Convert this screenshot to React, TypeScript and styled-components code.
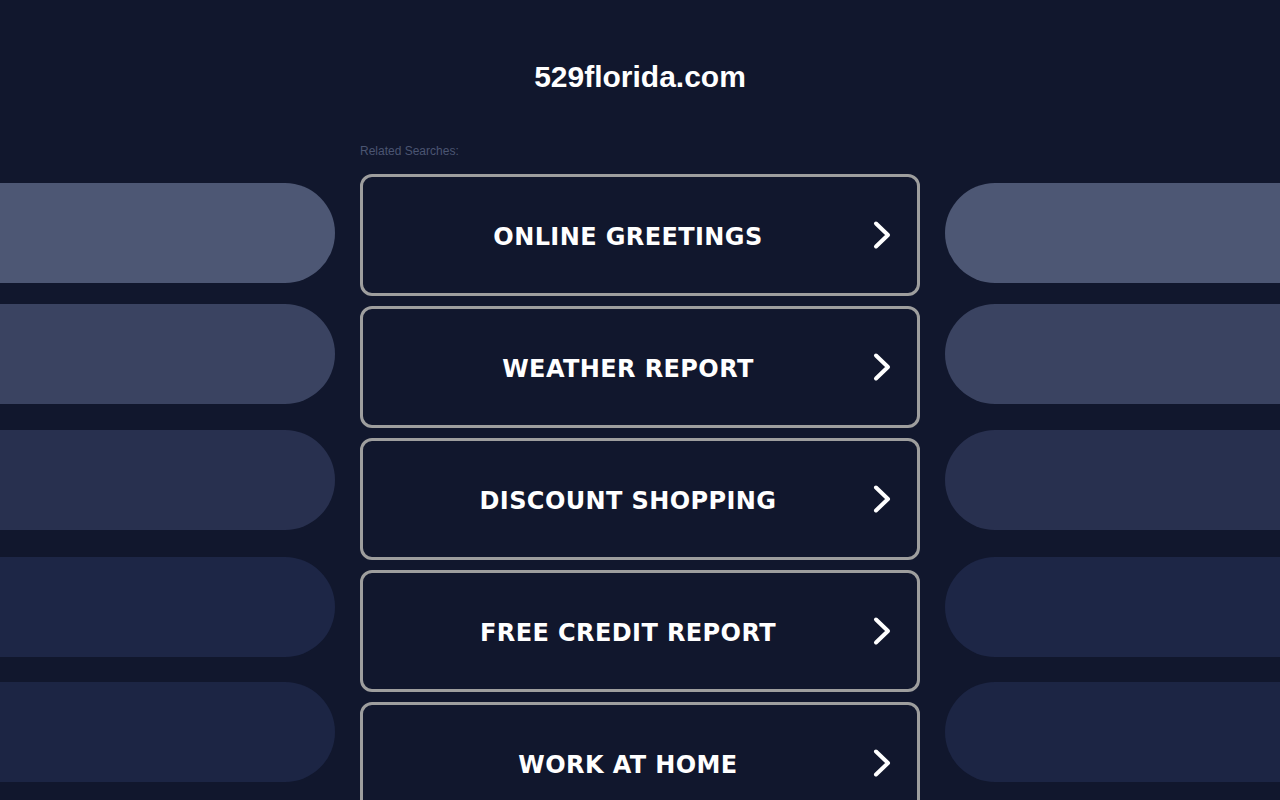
import React from 'react';
import styled, { createGlobalStyle } from 'styled-components';

const GlobalStyle = createGlobalStyle`
    html, body {
        margin: 0;
        padding: 0;
        background: #11172d;
        overflow: hidden;
    }
`;

const Page = styled.div`
    width: 1280px;
    height: 800px;
    display: grid;
    grid-template-columns: 335px 560px 335px;
    column-gap: 25px;
    background: #11172d;
    overflow: hidden;
`;

const Side = styled.div`
    display: flex;
    flex-direction: column;
    padding-top: 183px;
`;

const Pill = styled.div<{ $color: string; $gap: number; $right?: boolean }>`
    flex: none;
    width: 100%;
    height: 100px;
    margin-top: ${p => p.$gap}px;
    background: ${p => p.$color};
    border-radius: ${p => (p.$right ? '50px 0 0 50px' : '0 50px 50px 0')};
`;

const Center = styled.main`
    display: flex;
    flex-direction: column;
`;

const Title = styled.h1`
    margin: 0;
    padding-top: 60px;
    height: 34px;
    text-align: center;
    font-family: 'Liberation Sans', Arial, sans-serif;
    font-size: 30px;
    font-weight: 700;
    line-height: 34px;
    color: #ffffff;
`;

const Related = styled.div`
    margin-top: 50px;
    font-family: 'Liberation Sans', Arial, sans-serif;
    font-size: 12px;
    line-height: 14px;
    color: #4b5572;
`;

const List = styled.div`
    margin-top: 16px;
    display: flex;
    flex-direction: column;
    gap: 10px;
`;

const Link = styled.a`
    flex: none;
    box-sizing: border-box;
    height: 122px;
    display: flex;
    align-items: center;
    padding: 0 24px;
    border: 3px solid #9e9e9e;
    border-radius: 12px;
    color: #ffffff;
    text-decoration: none;
    cursor: pointer;
`;

const Label = styled.span`
    flex: 1;
    padding-top: 4px;
    text-align: center;
    font-family: 'DejaVu Sans', Verdana, sans-serif;
    font-size: 24px;
    font-weight: 700;
    letter-spacing: 0.4px;
`;

const Chevron = () => (
    <svg width="24" height="32" viewBox="0 0 24 32" fill="none">
        <path
            d="M7 4.5 L19 16 L7 27.5"
            stroke="#ffffff"
            strokeWidth="4"
            strokeLinecap="round"
            strokeLinejoin="round"
        />
    </svg>
);

const pills = [
    { color: '#4d5774', gap: 0 },
    { color: '#3a4361', gap: 21 },
    { color: '#28304f', gap: 26 },
    { color: '#1d2646', gap: 27 },
    { color: '#1c2544', gap: 25 },
];

const searches = [
    'ONLINE GREETINGS',
    'WEATHER REPORT',
    'DISCOUNT SHOPPING',
    'FREE CREDIT REPORT',
    'WORK AT HOME',
];

const App = () => {
    return (
        <>
            <GlobalStyle />
            <Page>
                <Side>
                    {pills.map(p => (
                        <Pill key={p.color} $color={p.color} $gap={p.gap} />
                    ))}
                </Side>
                <Center>
                    <Title>529florida.com</Title>
                    <Related>Related Searches:</Related>
                    <List>
                        {searches.map(s => (
                            <Link key={s}>
                                <Label>{s}</Label>
                                <Chevron />
                            </Link>
                        ))}
                    </List>
                </Center>
                <Side>
                    {pills.map(p => (
                        <Pill key={p.color} $color={p.color} $gap={p.gap} $right />
                    ))}
                </Side>
            </Page>
        </>
    );
};

export default App;
